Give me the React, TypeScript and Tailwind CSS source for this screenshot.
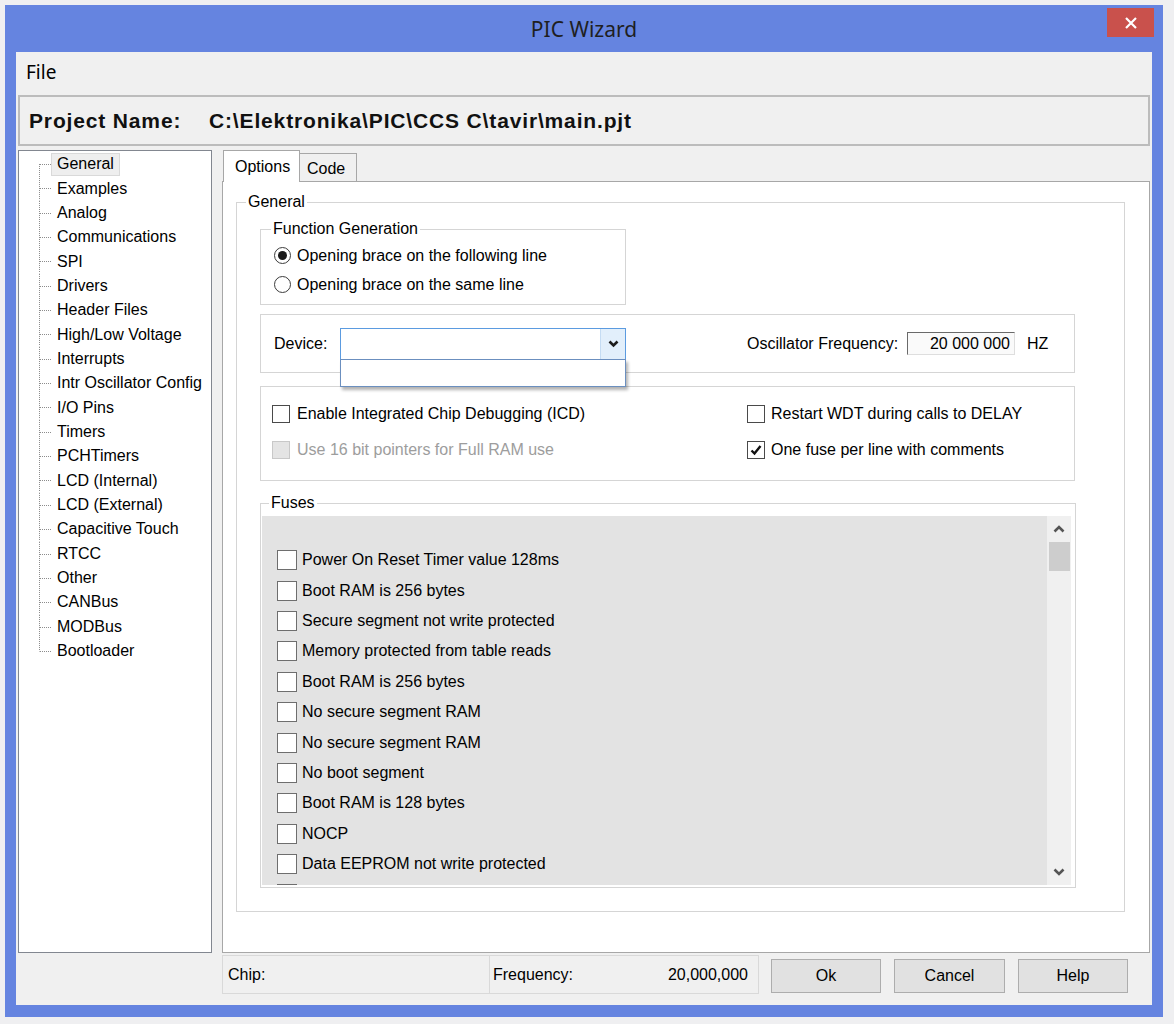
import React from "react";

const treeItems = [
  "General",
  "Examples",
  "Analog",
  "Communications",
  "SPI",
  "Drivers",
  "Header Files",
  "High/Low Voltage",
  "Interrupts",
  "Intr Oscillator Config",
  "I/O Pins",
  "Timers",
  "PCHTimers",
  "LCD (Internal)",
  "LCD (External)",
  "Capacitive Touch",
  "RTCC",
  "Other",
  "CANBus",
  "MODBus",
  "Bootloader",
];

// last entry is cut off by the list edge, only its box top shows
const fuses = [
  "Power On Reset Timer value 128ms",
  "Boot RAM is 256 bytes",
  "Secure segment not write protected",
  "Memory protected from table reads",
  "Boot RAM is 256 bytes",
  "No secure segment RAM",
  "No secure segment RAM",
  "No boot segment",
  "Boot RAM is 128 bytes",
  "NOCP",
  "Data EEPROM not write protected",
  "",
];

function GroupBox({
  label,
  className,
  labelLeft,
  children,
}: {
  label: string;
  className: string;
  labelLeft: string;
  children?: React.ReactNode;
}) {
  return (
    <div className={`relative border border-[#d5d5d5] ${className}`}>
      <span
        className={`absolute top-[-11px] ${labelLeft} bg-white px-[2px] leading-[20px]`}
      >
        {label}
      </span>
      {children}
    </div>
  );
}

function Check({ checked, disabled }: { checked?: boolean; disabled?: boolean }) {
  return (
    <span
      className={
        disabled
          ? "w-[18px] h-[18px] shrink-0 border border-[#c8c8c8] bg-[#e4e4e4]"
          : "w-[18px] h-[18px] shrink-0 border border-[#4a4a4a] bg-white flex items-center justify-center"
      }
    >
      {checked && (
        <svg width="14" height="14" viewBox="0 0 14 14">
          <polyline
            points="2.5,7.5 5.5,10.5 11.5,3"
            fill="none"
            stroke="#111"
            strokeWidth="2.4"
          />
        </svg>
      )}
    </span>
  );
}

function Radio({ selected }: { selected?: boolean }) {
  return (
    <span className="w-[17px] h-[17px] shrink-0 rounded-full border border-[#3c3c3c] bg-white flex items-center justify-center">
      {selected && <span className="w-[9px] h-[9px] rounded-full bg-[#1a1a1a]" />}
    </span>
  );
}

export default function App() {
  const last = treeItems.length - 1;
  return (
    <div className="w-[1174px] h-[1024px] overflow-hidden bg-[#efeff1] pt-[5px] pl-[5px] font-['Liberation_Sans',Arial,sans-serif] text-[16px] text-black">
      <div className="w-[1158px] h-[1012px] bg-[#6584e0] flex flex-col">
        {/* Title bar */}
        <div className="h-[47px] flex items-start shrink-0">
          <div className="w-[56px]" />
          <div className="flex-1 h-full flex items-center justify-center pt-[3px] font-['Noto_Sans',sans-serif] text-[21px] text-[#1f1f1f]">
            PIC Wizard
          </div>
          <div className="w-[47px] h-[29px] mt-[3px] mr-[9px] bg-[#c9514c] flex items-center justify-center">
            <svg width="14" height="14" viewBox="0 0 14 14">
              <path d="M2 2 L12 12 M12 2 L2 12" stroke="#fff" strokeWidth="2.2" />
            </svg>
          </div>
        </div>

        {/* Client */}
        <div className="flex-1 mx-[11px] mb-[12px] bg-[#f0f0f0] flex flex-col">
          <div className="h-[41px] shrink-0 flex items-center pl-[10px] font-['Noto_Sans',sans-serif] text-[19px]">
            File
          </div>

          <div className="mx-[2px] mt-[2px] h-[51px] shrink-0 border-2 border-[#bcbcbc] flex items-center pl-[9px] pt-[1px] font-bold text-[21px] tracking-[0.85px] text-[#111]">
            <span className="w-[180px]">Project Name:</span>
            <span>C:\Elektronika\PIC\CCS C\tavir\main.pjt</span>
          </div>

          <div className="mt-[4px] h-[803px] shrink-0 flex">
            {/* Tree */}
            <div className="ml-[2px] w-[194px] bg-white border border-[#828790] pt-[1px] flex flex-col">
              {treeItems.map((t, i) => (
                <div key={t} className="h-[24.35px] flex items-center pl-[20px]">
                  <svg width="12" height="24.35" className="shrink-0">
                    <line
                      x1="0.5"
                      x2="0.5"
                      y1={i === 0 ? 12 : 0}
                      y2={i === last ? 12.5 : 24.35}
                      stroke="#8c8c8c"
                      strokeDasharray="1 1"
                    />
                    <line
                      x1="1"
                      x2="12"
                      y1="12.5"
                      y2="12.5"
                      stroke="#8c8c8c"
                      strokeDasharray="1 1"
                    />
                  </svg>
                  <span
                    className={
                      i === 0
                        ? "h-[23px] px-[5px] border border-[#d9d9d9] bg-[#eeeeee] flex items-center"
                        : "h-[23px] px-[5px] border border-transparent flex items-center"
                    }
                  >
                    {t}
                  </span>
                </div>
              ))}
            </div>

            {/* Tabs */}
            <div className="ml-[10px] mr-[2px] flex-1 flex flex-col">
              <div className="h-[31px] shrink-0 flex items-end pl-[1px]">
                <div className="relative z-10 -mb-px w-[77px] h-[32px] bg-white border border-b-0 border-[#a7a7a7] flex items-center pl-[11px]">
                  Options
                </div>
                <div className="w-[57px] h-[28px] bg-[#f0f0f0] border border-b-0 border-l-0 border-[#a7a7a7] flex items-center pl-[7px] pt-[2px]">
                  Code
                </div>
              </div>

              <div className="flex-1 bg-white border border-[#a7a7a7] flex flex-col">
                <GroupBox
                  label="General"
                  labelLeft="left-[9px]"
                  className="mt-[20px] ml-[13px] mr-[24px] h-[710px] flex flex-col pl-[23px]"
                >
                  {/* Function Generation */}
                  <GroupBox
                    label="Function Generation"
                    labelLeft="left-[10px]"
                    className="mt-[26px] w-[366px] h-[76px] shrink-0 pt-[11px] pl-[13px]"
                  >
                    <div className="h-[29px] flex items-center gap-[6px]">
                      <Radio selected />
                      <span>Opening brace on the following line</span>
                    </div>
                    <div className="h-[29px] flex items-center gap-[6px]">
                      <Radio />
                      <span>Opening brace on the same line</span>
                    </div>
                  </GroupBox>

                  {/* Device */}
                  <div className="relative z-20 mt-[9px] w-[815px] h-[59px] shrink-0 border border-[#d5d5d5] flex items-center pl-[13px]">
                    <span className="w-[66px]">Device:</span>
                    <div className="relative w-[286px] h-[32px] border border-[#5b9be0] bg-white flex">
                      <div className="flex-1" />
                      <div className="w-[25px] h-full bg-[#e2effb] border-l border-[#c5dcf3] flex items-center justify-center">
                        <svg width="11" height="8" viewBox="0 0 11 8">
                          <polyline
                            points="1.5,1.5 5.5,5.5 9.5,1.5"
                            fill="none"
                            stroke="#1c1c1c"
                            strokeWidth="2.6"
                          />
                        </svg>
                      </div>
                      <div className="absolute left-[-1px] top-full w-[286px] h-[28px] bg-white border border-[#6b8fbf] shadow-[2px_3px_3px_rgba(0,0,0,0.3)]" />
                    </div>
                    <span className="ml-[121px] w-[160px]">Oscillator Frequency:</span>
                    <div className="w-[108px] h-[23px] border-t border-l border-[#6a6a6a] border-r border-b border-r-[#dedede] border-b-[#dedede] bg-[#fafafa] flex items-center justify-end pr-[4px]">
                      20 000 000
                    </div>
                    <span className="ml-[12px]">HZ</span>
                  </div>

                  {/* Options */}
                  <div className="mt-[13px] w-[815px] h-[95px] shrink-0 border border-[#d5d5d5] pt-[9px] pl-[11px] flex flex-col">
                    <div className="h-[36px] flex items-center">
                      <div className="w-[475px] flex items-center gap-[7px]">
                        <Check />
                        <span>Enable Integrated Chip Debugging (ICD)</span>
                      </div>
                      <div className="flex items-center gap-[6px]">
                        <Check />
                        <span>Restart WDT during calls to DELAY</span>
                      </div>
                    </div>
                    <div className="h-[36px] flex items-center">
                      <div className="w-[475px] flex items-center gap-[7px]">
                        <Check disabled />
                        <span className="text-[#9d9d9d]">Use 16 bit pointers for Full RAM use</span>
                      </div>
                      <div className="flex items-center gap-[6px]">
                        <Check checked />
                        <span>One fuse per line with comments</span>
                      </div>
                    </div>
                  </div>

                  {/* Fuses */}
                  <GroupBox
                    label="Fuses"
                    labelLeft="left-[8px]"
                    className="mt-[22px] w-[816px] h-[385px] shrink-0 pt-[12px] pl-[1px] pr-[4px] pb-[2px] flex flex-col"
                  >
                    <div className="flex-1 flex bg-[#e3e3e3] overflow-hidden">
                      <div className="flex-1 overflow-hidden pt-[29px] pl-[15px] flex flex-col">
                        {fuses.map((f, i) => (
                          <div key={i} className="h-[30.4px] shrink-0 flex items-center gap-[5px]">
                            <span className="w-[20px] h-[20px] shrink-0 border border-[#6e6e6e] bg-white" />
                            {f && <span>{f}</span>}
                          </div>
                        ))}
                      </div>
                      <div className="w-[24px] bg-[#f0f0f0] flex flex-col items-center">
                        <div className="h-[26px] w-full flex items-center justify-center">
                          <svg width="12" height="8" viewBox="0 0 12 8">
                            <polyline
                              points="1.5,6.5 6,2 10.5,6.5"
                              fill="none"
                              stroke="#555"
                              strokeWidth="2.6"
                            />
                          </svg>
                        </div>
                        <div className="ml-[1px] w-[21px] h-[29px] bg-[#cdcdcd]" />
                        <div className="flex-1" />
                        <div className="h-[26px] w-full flex items-center justify-center">
                          <svg width="12" height="8" viewBox="0 0 12 8">
                            <polyline
                              points="1.5,1.5 6,6 10.5,1.5"
                              fill="none"
                              stroke="#555"
                              strokeWidth="2.6"
                            />
                          </svg>
                        </div>
                      </div>
                    </div>
                  </GroupBox>
                </GroupBox>
              </div>
            </div>
          </div>

          {/* Bottom bar */}
          <div className="flex-1 flex items-start">
            <div className="ml-[206px] mt-[2px] w-[268px] h-[39px] border border-[#d9d9d9] flex items-center pl-[5px]">
              Chip:
            </div>
            <div className="mt-[2px] w-[269px] h-[39px] border border-l-0 border-[#d9d9d9] flex items-center pl-[3px] pr-[10px]">
              <span>Frequency:</span>
              <span className="ml-auto">20,000,000</span>
            </div>
            <button className="ml-[12px] mt-[6px] w-[110px] h-[34px] bg-[#e1e1e1] border border-[#adadad] flex items-center justify-center">
              Ok
            </button>
            <button className="ml-[13px] mt-[6px] w-[111px] h-[34px] bg-[#e1e1e1] border border-[#adadad] flex items-center justify-center">
              Cancel
            </button>
            <button className="ml-[13px] mt-[6px] w-[110px] h-[34px] bg-[#e1e1e1] border border-[#adadad] flex items-center justify-center">
              Help
            </button>
          </div>
        </div>
      </div>
    </div>
  );
}
